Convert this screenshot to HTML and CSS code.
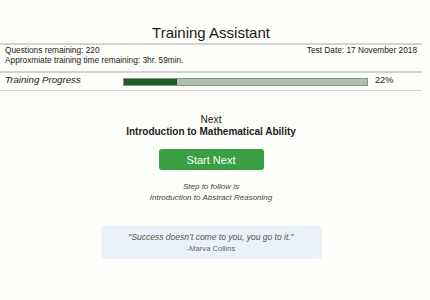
FILE: index.html
```html
<!DOCTYPE html>
<html lang="en">
<head>
    <meta charset="UTF-8">
    <meta name="viewport" content="width=device-width, initial-scale=1.0">
    <title>Training Assistant</title>
    <link rel="stylesheet" href="styles.css">
</head>
<body>
    <div class="page">
        <h1 class="head">Training Assistant</h1>
        <div class="info">
            <div class="info-left">
                <div>Questions remaining: 220</div>
                <div>Approxmiate training time remaining: 3hr. 59min.</div>
            </div>
            <div class="info-right">Test Date: 17 November 2018</div>
        </div>
        <div class="progress-row">
            <span class="progress-label">Training Progress</span>
            <div class="bar">
                <div class="bar-fill" style="width: 22%;"></div>
            </div>
            <span class="percent">22%</span>
        </div>
        <div class="next">
            <div class="next-title">Next</div>
            <div class="next-name">Introduction to Mathematical Ability</div>
            <button class="start">Start Next</button>
            <div class="follow">
                <div>Step to follow is</div>
                <div>Introduction to Abstract Reasoning</div>
            </div>
            <div class="quote">
                <div class="quote-text">"Success doesn’t come to you, you go to it."</div>
                <div class="quote-author">-Marva Collins</div>
            </div>
        </div>
    </div>
</body>
</html>
```

FILE: styles.css
```css
body {
    font-family: "Liberation Sans", Arial, sans-serif;
    margin: 0;
    padding: 0;
    background-color: #fdfdf9;
    color: #222;
}
.page {
    width: 422px;
}
.head {
    margin: 0;
    padding-top: 24px;
    padding-bottom: 1px;
    font-size: 15px;
    line-height: 18px;
    font-weight: normal;
    text-align: center;
    color: #1a1a1a;
    border-bottom: 2px solid #d2d2d2;
}
.info {
    display: flex;
    justify-content: space-between;
    padding: 1px 5px 6px 5px;
    font-size: 8.3px;
    line-height: 9.6px;
    border-bottom: 2px solid #d2d2d2;
}
.progress-row {
    display: flex;
    align-items: center;
    height: 17px;
    padding-left: 5px;
    border-bottom: 1px solid #d2d2d2;
}
.progress-label {
    width: 118px;
    font-size: 9.7px;
    font-style: italic;
    line-height: 12px;
    margin-bottom: 4px;
}
.bar {
    width: 243px;
    height: 6px;
    background-color: #adc0ae;
    border: 1px solid #7f9a81;
    margin-right: 7px;
}
.bar-fill {
    height: 100%;
    background-color: #1f5a2b;
}
.percent {
    font-size: 9.2px;
    line-height: 12px;
    margin-bottom: 3px;
}
.next {
    display: flex;
    flex-direction: column;
    align-items: center;
    padding-top: 23px;
    text-align: center;
}
.next-title {
    font-size: 10.2px;
    line-height: 12px;
}
.next-name {
    font-size: 10px;
    font-weight: bold;
    line-height: 12px;
}
.start {
    margin-top: 11px;
    width: 105px;
    height: 21px;
    border: none;
    border-radius: 3px;
    background-color: #3a9e43;
    color: #fff;
    font-family: "Liberation Sans", Arial, sans-serif;
    font-size: 11px;
    padding: 0;
}
.follow {
    margin-top: 12px;
    font-size: 8px;
    font-style: italic;
    line-height: 10.5px;
    color: #444;
}
.quote {
    margin-top: 23px;
    width: 221px;
    padding: 6px 0 5px 0;
    background-color: #ebf1f8;
    border-radius: 3px;
}
.quote-text {
    font-size: 8.5px;
    font-style: italic;
    line-height: 10.5px;
    color: #555;
}
.quote-author {
    font-size: 7.6px;
    line-height: 10px;
    color: #666;
    margin-top: 1px;
}
```
